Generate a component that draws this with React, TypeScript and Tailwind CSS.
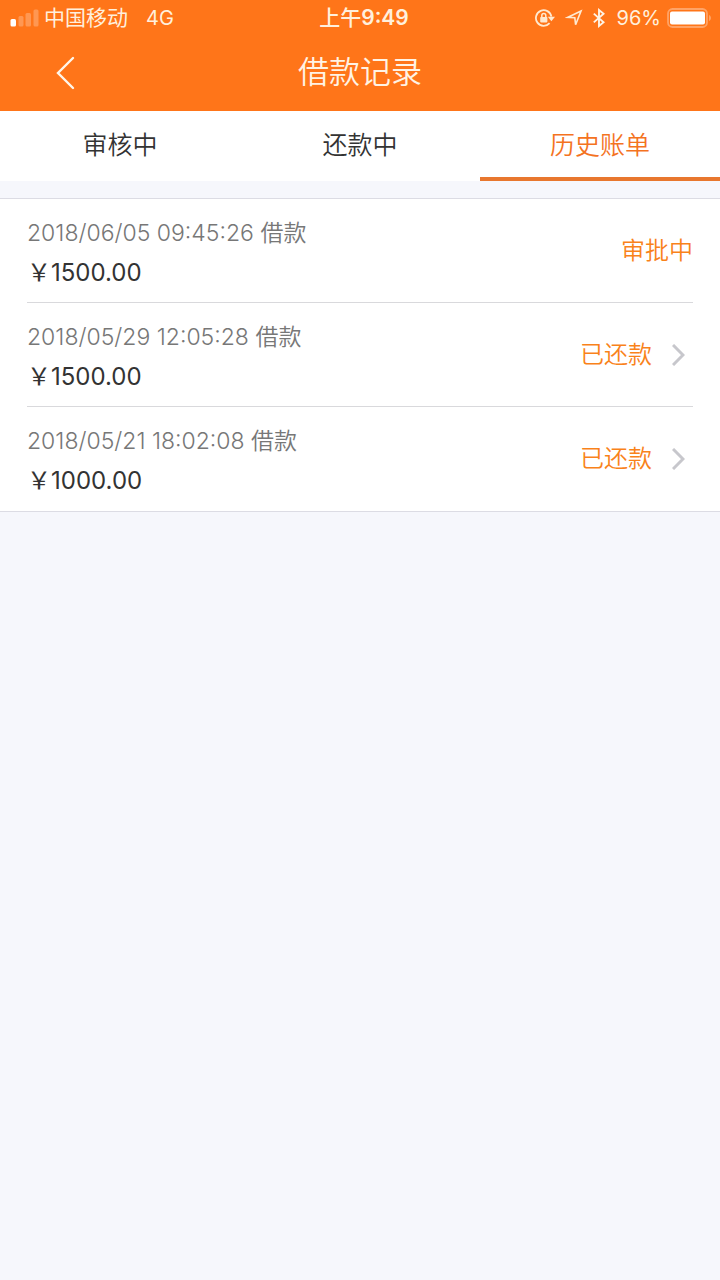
import { useState } from "react";
import clsx from "clsx";

type LoanRecord = {
  time: string;
  amount: string;
  status: string;
  hasDetail: boolean;
};

const TABS = ["审核中", "还款中", "历史账单"];

// full-width yen sign
const YUAN = "\uFFE5";

const RECORDS: LoanRecord[] = [
  { time: "2018/06/05 09:45:26", amount: "1500.00", status: "审批中", hasDetail: false },
  { time: "2018/05/29 12:05:28", amount: "1500.00", status: "已还款", hasDetail: true },
  { time: "2018/05/21 18:02:08", amount: "1000.00", status: "已还款", hasDetail: true },
];

function SignalIcon() {
  return (
    <svg width="29" height="18" viewBox="0 0 29 18" fill="#fff">
      <rect x="0.5" y="10" width="5.5" height="7.5" rx="1.5" />
      <rect x="8.5" y="7" width="5" height="10.5" rx="1.5" opacity="0.25" />
      <rect x="15.5" y="4" width="5.5" height="13.5" rx="1.5" opacity="0.25" />
      <rect x="23.5" y="0.5" width="5" height="17" rx="1.5" opacity="0.25" />
    </svg>
  );
}

function RotationLockIcon() {
  return (
    <svg width="20" height="18" viewBox="0 0 20 18" fill="none" stroke="#ffe9d0" strokeWidth="1.8">
      <path d="M14.6 14.2A7.8 7.8 0 1 1 16.4 7.6" />
      <path d="M12.8 7.8H20l-3.6 4.4z" fill="#ffe9d0" stroke="none" />
      <rect x="5.2" y="8" width="7.2" height="5.4" rx="0.8" fill="#ffe9d0" stroke="none" />
      <path d="M6.8 8.6V6.4a2 2 0 0 1 4 0v2.2" strokeWidth="1.5" />
    </svg>
  );
}

function LocationIcon() {
  return (
    <svg width="18" height="18" viewBox="0 0 18 18" fill="none" stroke="#ffe9d0" strokeWidth="1.6">
      <path d="M16 2L3 8.3l6.8.4.8 7z" />
    </svg>
  );
}

function BluetoothIcon() {
  return (
    <svg width="12" height="20" viewBox="0 0 12 20" fill="none" stroke="#fff3e4" strokeWidth="1.9">
      <path d="M0.8 5.6l9.8 8.6L6 18V2l4.6 3.8L0.8 14.4" />
    </svg>
  );
}

function BatteryIcon() {
  return (
    <svg width="45" height="20" viewBox="0 0 45 20">
      <rect x="1" y="1" width="39" height="18" rx="4.5" fill="none" stroke="#ffa366" strokeWidth="1.8" />
      <rect x="3" y="3.5" width="35" height="13" rx="2" fill="#fff" />
      <path d="M42 7c2.6 1 2.6 5 0 6z" fill="#ffa366" />
    </svg>
  );
}

function StatusBar() {
  return (
    <div className="grid h-9 grid-cols-[1fr_auto_1fr] items-center pr-2 pl-[10px] text-[21px] text-[#fff0dd]">
      <div className="flex items-center">
        <SignalIcon />
        <span className="ml-[5px]">中国移动</span>
        <span className="ml-[18px] text-[20px]">4G</span>
      </div>
      <div className="pl-[6px] font-semibold">
        <span className="font-medium">上午</span>9:49
      </div>
      <div className="flex items-center justify-end">
        <RotationLockIcon />
        <span className="ml-[10px]"><LocationIcon /></span>
        <span className="ml-[10px]"><BluetoothIcon /></span>
        <span className="ml-3 text-[20px]">96%</span>
        <span className="ml-[6px]"><BatteryIcon /></span>
      </div>
    </div>
  );
}

function RecordItem({ record, last }: { record: LoanRecord; last: boolean }) {
  return (
    <li className={clsx("flex h-[104px] items-center justify-between", !last && "border-b border-[#d9d9dc]")}>
      <div className="pt-1">
        <p className="text-[23px] leading-10 font-[350] text-[#777]">{record.time} 借款</p>
        <p className="text-[24px] leading-10 text-[#333]">
          {YUAN}{record.amount}
        </p>
      </div>
      {record.hasDetail ? (
        <a href="#detail" className="flex items-center gap-5 pr-2 text-[24px] font-[350] text-[#f9821a]">
          {record.status}
          <svg width="13" height="22" viewBox="0 0 13 22" fill="none" stroke="#c7c7cc" strokeWidth="3">
            <path d="M1 1l10 10L1 21" />
          </svg>
        </a>
      ) : (
        <span className="text-[24px] font-[350] text-[#f9821a]">{record.status}</span>
      )}
    </li>
  );
}

export default function App() {
  const [active, setActive] = useState(2);

  return (
    <div className="min-h-screen bg-[#f6f7fc] font-['Inter','Noto_Sans_CJK_SC',sans-serif]">
      <header className="bg-[#ff7519]">
        <StatusBar />
        <div className="grid h-[75px] grid-cols-[1fr_auto_1fr] items-center pb-[2px]">
          <button type="button" aria-label="返回" className="ml-[55px] justify-self-start">
            <svg width="20" height="34" viewBox="0 0 20 34" fill="none" stroke="#fff6ea" strokeWidth="2.4" strokeLinecap="round">
              <path d="M18 2L3 17l15 15" />
            </svg>
          </button>
          <h1 className="text-[31px] font-[350] text-[#fff3e4]">借款记录</h1>
        </div>
      </header>

      <nav className="grid h-[70px] grid-cols-3 bg-white">
        {TABS.map((tab, i) => (
          <button
            key={tab}
            type="button"
            onClick={() => setActive(i)}
            className={clsx(
              "border-y-4 border-t-transparent text-[25px] font-[350]",
              i === active ? "border-b-[#e8772e] text-[#f4731f]" : "border-b-transparent text-[#333]"
            )}
          >
            {tab}
          </button>
        ))}
      </nav>

      <ul className="mt-[17px] border-y border-[#dcdce4] bg-white px-[27px]">
        {RECORDS.map((record, i) => (
          <RecordItem key={record.time} record={record} last={i === RECORDS.length - 1} />
        ))}
      </ul>
    </div>
  );
}
